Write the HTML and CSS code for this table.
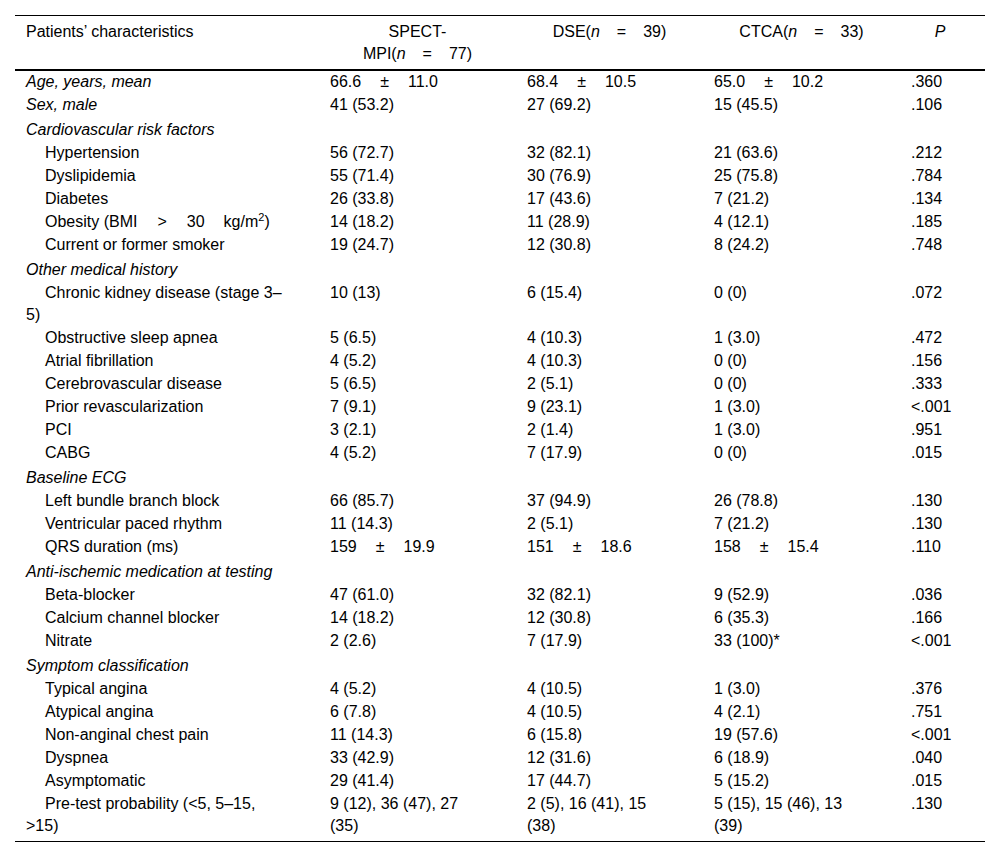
FILE: index.html
```html
<!DOCTYPE html>
<html>
<head>
<meta charset="utf-8">
<link rel="stylesheet" href="styles.css">
</head>
<body>
<div class="wrap">
<table class="tbl">
<colgroup>
<col class="c1"><col class="c2"><col class="c3"><col class="c4"><col class="c5">
</colgroup>
<thead>
<tr>
<th class="lab">Patients’ characteristics</th>
<th>SPECT-<br>MPI(<i>n</i><span class="eq">=</span>77)</th>
<th>DSE(<i>n</i><span class="eq">=</span>39)</th>
<th>CTCA(<i>n</i><span class="eq">=</span>33)</th>
<th><i>P</i></th>
</tr>
</thead>
<tbody>
<tr><td class="lab it">Age, years, mean</td><td>66.6<span class="op">±</span>11.0</td><td>68.4<span class="op">±</span>10.5</td><td>65.0<span class="op">±</span>10.2</td><td>.360</td></tr>
<tr><td class="lab it">Sex, male</td><td>41 (53.2)</td><td>27 (69.2)</td><td>15 (45.5)</td><td>.106</td></tr>
<tr class="sec"><td class="lab it" colspan="5">Cardiovascular risk factors</td></tr>
<tr><td class="lab sub">Hypertension</td><td>56 (72.7)</td><td>32 (82.1)</td><td>21 (63.6)</td><td>.212</td></tr>
<tr><td class="lab sub">Dyslipidemia</td><td>55 (71.4)</td><td>30 (76.9)</td><td>25 (75.8)</td><td>.784</td></tr>
<tr><td class="lab sub">Diabetes</td><td>26 (33.8)</td><td>17 (43.6)</td><td>7 (21.2)</td><td>.134</td></tr>
<tr><td class="lab sub">Obesity (BMI<span class="gt">&gt;</span>30<span class="gap"></span>kg/m<sup>2</sup>)</td><td>14 (18.2)</td><td>11 (28.9)</td><td>4 (12.1)</td><td>.185</td></tr>
<tr><td class="lab sub">Current or former smoker</td><td>19 (24.7)</td><td>12 (30.8)</td><td>8 (24.2)</td><td>.748</td></tr>
<tr class="sec"><td class="lab it" colspan="5">Other medical history</td></tr>
<tr><td class="lab sub">Chronic kidney disease (stage 3–5)</td><td>10 (13)</td><td>6 (15.4)</td><td>0 (0)</td><td>.072</td></tr>
<tr><td class="lab sub">Obstructive sleep apnea</td><td>5 (6.5)</td><td>4 (10.3)</td><td>1 (3.0)</td><td>.472</td></tr>
<tr><td class="lab sub">Atrial fibrillation</td><td>4 (5.2)</td><td>4 (10.3)</td><td>0 (0)</td><td>.156</td></tr>
<tr><td class="lab sub">Cerebrovascular disease</td><td>5 (6.5)</td><td>2 (5.1)</td><td>0 (0)</td><td>.333</td></tr>
<tr><td class="lab sub">Prior revascularization</td><td>7 (9.1)</td><td>9 (23.1)</td><td>1 (3.0)</td><td>&lt;.001</td></tr>
<tr><td class="lab sub">PCI</td><td>3 (2.1)</td><td>2 (1.4)</td><td>1 (3.0)</td><td>.951</td></tr>
<tr><td class="lab sub">CABG</td><td>4 (5.2)</td><td>7 (17.9)</td><td>0 (0)</td><td>.015</td></tr>
<tr class="sec"><td class="lab it" colspan="5">Baseline ECG</td></tr>
<tr><td class="lab sub">Left bundle branch block</td><td>66 (85.7)</td><td>37 (94.9)</td><td>26 (78.8)</td><td>.130</td></tr>
<tr><td class="lab sub">Ventricular paced rhythm</td><td>11 (14.3)</td><td>2 (5.1)</td><td>7 (21.2)</td><td>.130</td></tr>
<tr><td class="lab sub">QRS duration (ms)</td><td>159<span class="op">±</span>19.9</td><td>151<span class="op">±</span>18.6</td><td>158<span class="op">±</span>15.4</td><td>.110</td></tr>
<tr class="sec"><td class="lab it" colspan="5">Anti-ischemic medication at testing</td></tr>
<tr><td class="lab sub">Beta-blocker</td><td>47 (61.0)</td><td>32 (82.1)</td><td>9 (52.9)</td><td>.036</td></tr>
<tr><td class="lab sub">Calcium channel blocker</td><td>14 (18.2)</td><td>12 (30.8)</td><td>6 (35.3)</td><td>.166</td></tr>
<tr><td class="lab sub">Nitrate</td><td>2 (2.6)</td><td>7 (17.9)</td><td>33 (100)*</td><td>&lt;.001</td></tr>
<tr class="sec"><td class="lab it" colspan="5">Symptom classification</td></tr>
<tr><td class="lab sub">Typical angina</td><td>4 (5.2)</td><td>4 (10.5)</td><td>1 (3.0)</td><td>.376</td></tr>
<tr><td class="lab sub">Atypical angina</td><td>6 (7.8)</td><td>4 (10.5)</td><td>4 (2.1)</td><td>.751</td></tr>
<tr><td class="lab sub">Non-anginal chest pain</td><td>11 (14.3)</td><td>6 (15.8)</td><td>19 (57.6)</td><td>&lt;.001</td></tr>
<tr><td class="lab sub">Dyspnea</td><td>33 (42.9)</td><td>12 (31.6)</td><td>6 (18.9)</td><td>.040</td></tr>
<tr><td class="lab sub">Asymptomatic</td><td>29 (41.4)</td><td>17 (44.7)</td><td>5 (15.2)</td><td>.015</td></tr>
<tr class="last"><td class="lab sub">Pre-test probability (&lt;5, 5–15, &gt;15)</td><td>9 (12), 36 (47), 27 (35)</td><td>2 (5), 16 (41), 15 (38)</td><td>5 (15), 15 (46), 13 (39)</td><td>.130</td></tr>
</tbody>
</table>
</div>
</body>
</html>
```

FILE: styles.css
```css
html, body {
  margin: 0;
  padding: 0;
  background: #fff;
}
body {
  font-family: "Liberation Sans", Arial, sans-serif;
  font-size: 16px;
  color: #000;
}
.wrap {
  padding: 15px;
}
.tbl {
  width: 970px;
  table-layout: fixed;
  border-collapse: collapse;
  border-top: 1px solid #000;
  border-bottom: 1px solid #000;
}
.c1 { width: 309px; }
.c2 { width: 197px; }
.c3 { width: 187px; }
.c4 { width: 197px; }
.c5 { width: 80px; }
.tbl th {
  font-weight: normal;
  text-align: center;
  vertical-align: top;
  line-height: 22px;
  padding: 5px 16px 4px 6px;
  border-bottom: 2px solid #000;
}
.tbl th.lab {
  text-align: left;
  padding-left: 11px;
}
.tbl td {
  vertical-align: top;
  line-height: 22px;
  padding: 0 40px 1px 6px;
  text-align: left;
}
.tbl td.lab {
  padding-left: 11px;
  padding-right: 40px;
}
.tbl .sec td {
  padding-top: 2px;
  padding-bottom: 1px;
}
.tbl .last td {
  padding-bottom: 4px;
}
.tbl td:last-child {
  padding-right: 4px;
}
.it {
  font-style: italic;
}
.sub {
  text-indent: 19px;
}
.op {
  padding: 0 19px;
}
.eq {
  padding: 0 17px;
}
.gt {
  padding: 0 20px;
}
.gap {
  display: inline-block;
  width: 19px;
}
sup {
  font-size: 11px;
  line-height: 0;
  vertical-align: 6px;
}
```
